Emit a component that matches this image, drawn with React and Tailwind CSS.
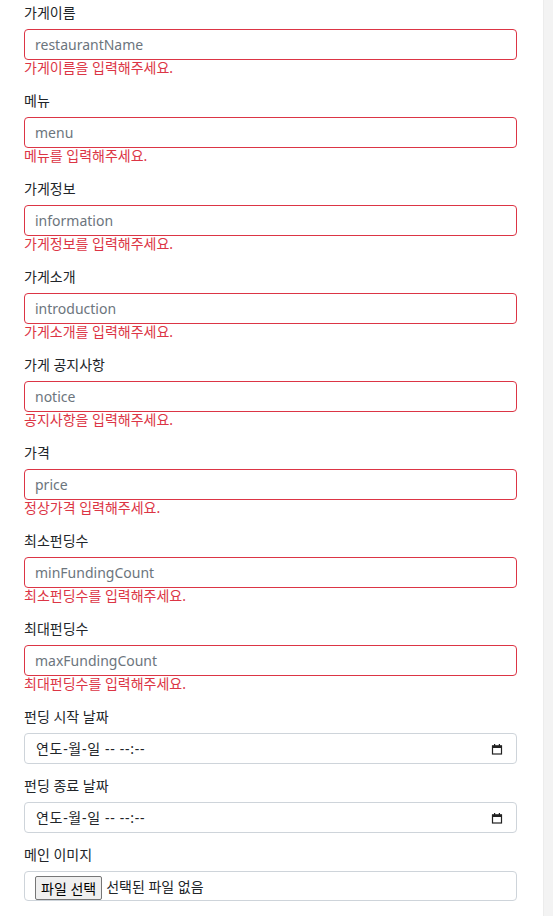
import React from "react";

const fields = [
  { label: "가게이름", name: "restaurantName", error: "가게이름을 입력해주세요." },
  { label: "메뉴", name: "menu", error: "메뉴를 입력해주세요." },
  { label: "가게정보", name: "information", error: "가게정보를 입력해주세요." },
  { label: "가게소개", name: "introduction", error: "가게소개를 입력해주세요." },
  { label: "가게 공지사항", name: "notice", error: "공지사항을 입력해주세요." },
  { label: "가격", name: "price", error: "정상가격 입력해주세요." },
  { label: "최소펀딩수", name: "minFundingCount", error: "최소펀딩수를 입력해주세요." },
  { label: "최대펀딩수", name: "maxFundingCount", error: "최대펀딩수를 입력해주세요." },
];

function CalendarIcon() {
  return (
    <svg width="12" height="12" viewBox="0 0 12 12" className="text-[#222]">
      <rect x="1.5" y="3" width="9" height="8" fill="none" stroke="currentColor" strokeWidth="1.2" />
      <rect x="1" y="2.5" width="10" height="2.5" fill="currentColor" />
      <rect x="3" y="1" width="1.2" height="2" fill="currentColor" />
      <rect x="7.8" y="1" width="1.2" height="2" fill="currentColor" />
    </svg>
  );
}

function Label({ children }) {
  return <div className="mb-[6px] h-[23px] pt-[2px] leading-[21px] text-[#212529]">{children}</div>;
}

function DateField({ label }) {
  return (
    <div className="pb-[9px]">
      <Label>{label}</Label>
      <div className="flex h-[31px] items-center justify-between rounded border border-[#ced4da] pl-[11px] pr-[13px] text-[#212529]">
        <span className="tracking-[0.7px]">연도-월-일 -- --:--</span>
        <CalendarIcon />
      </div>
    </div>
  );
}

export default function App() {
  return (
    <div
      className="flex h-[916px] w-full overflow-hidden bg-white text-[14px]"
      style={{ fontFamily: "'Noto Sans', 'Noto Sans CJK KR', sans-serif" }}
    >
      <div className="flex-1 pl-6 pr-[26px]">
        {fields.map((f) => (
          <div key={f.name} className="pb-[11px]">
            <Label>{f.label}</Label>
            <input
              placeholder={f.name}
              className="block h-[31px] w-full rounded border border-[#dc3545] px-[10px] text-[14px] outline-none placeholder:text-[#6c757d]"
            />
            <div className="-mt-px h-[18px] leading-[18px] text-[#dc3545]">{f.error}</div>
          </div>
        ))}
        <DateField label="펀딩 시작 날짜" />
        <DateField label="펀딩 종료 날짜" />
        <div>
          <Label>메인 이미지</Label>
          <div className="flex h-[30px] items-end rounded border border-[#ced4da] pl-[10px] text-[#212529]">
            <button className="mr-[4px] flex h-[24px] items-center rounded-[2px] border border-[#767676] bg-[#efefef] px-[5px] text-[14px] text-black">
              파일 선택
            </button>
            <span className="mb-[3px]">선택된 파일 없음</span>
          </div>
        </div>
      </div>
      <div className="h-full w-[10px] border-l border-[#ececec] bg-[#f3f3f3]" />
    </div>
  );
}
